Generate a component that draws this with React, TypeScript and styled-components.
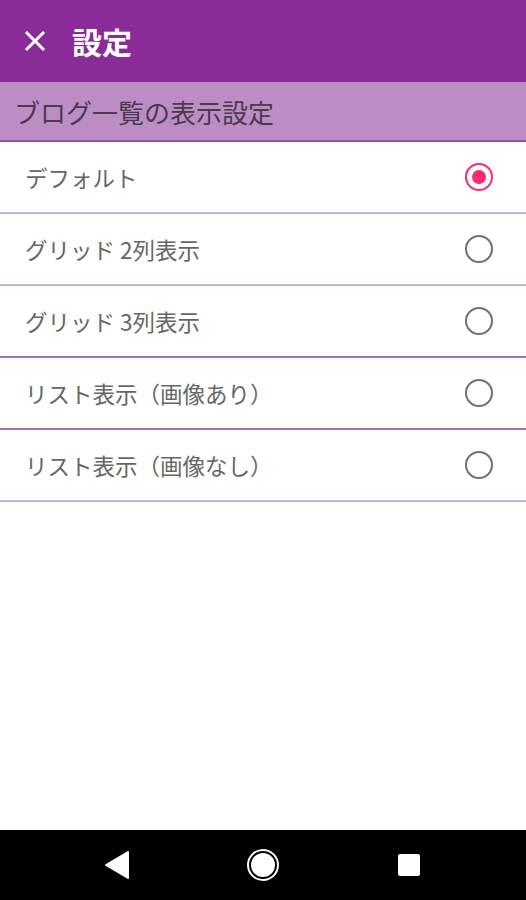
import styled, { createGlobalStyle } from "styled-components";

const GlobalStyle = createGlobalStyle`
  html, body {
    margin: 0;
    padding: 0;
    background: #ffffff;
  }
  body {
    font-family: "Noto Sans CJK JP", "Noto Sans", Roboto, sans-serif;
  }
`;

const Screen = styled.div`
  width: 526px;
  height: 900px;
  display: flex;
  flex-direction: column;
  background: #ffffff;
  overflow: hidden;
`;

const AppBar = styled.header`
  height: 82px;
  flex: none;
  background: #8a2b99;
  display: flex;
  align-items: center;
  padding: 0 0 0 22px;
  gap: 24px;
  color: #ffffff;
`;

const CloseButton = styled.button.attrs({ type: "button" })`
  all: unset;
  width: 26px;
  height: 26px;
  display: flex;
  align-items: center;
  justify-content: center;
`;

const Title = styled.h1`
  margin: 0;
  font-size: 30px;
  font-weight: 700;
  line-height: 1;
`;

const SectionHeader = styled.div`
  height: 58px;
  flex: none;
  background: #bc8dc4;
  border-bottom: 2px solid #9150a0;
  display: flex;
  align-items: center;
  padding-left: 14px;
  font-size: 26px;
  color: #4a3b4f;
`;

const OptionList = styled.ul`
  list-style: none;
  margin: 0;
  padding: 0;
`;

const OptionRow = styled.li<{ $dark?: boolean }>`
  height: 70px;
  display: flex;
  align-items: center;
  justify-content: space-between;
  padding: 0 33px 0 25px;
  border-bottom: 2px solid ${(p) => (p.$dark ? "#a770b4" : "#c9b0cf")};
  font-size: 22.5px;
  color: #666666;
`;

const Radio = styled.span<{ $checked?: boolean }>`
  width: 28px;
  height: 28px;
  border-radius: 50%;
  box-sizing: border-box;
  border: 2.5px solid ${(p) => (p.$checked ? "#ff2a6d" : "#6f6f6f")};
  display: flex;
  align-items: center;
  justify-content: center;

  &::after {
    content: "";
    width: 14px;
    height: 14px;
    border-radius: 50%;
    background: ${(p) => (p.$checked ? "#ff2a6d" : "transparent")};
  }
`;

const Spacer = styled.div`
  flex: 1;
`;

const NavBar = styled.nav`
  height: 70px;
  flex: none;
  background: #000000;
  display: grid;
  grid-template-columns: repeat(3, 146px);
  justify-content: center;
  align-items: center;
  justify-items: center;
`;

const options = [
  { label: "デフォルト", checked: true, dark: false },
  { label: "グリッド 2列表示", checked: false, dark: false },
  { label: "グリッド 3列表示", checked: false, dark: true },
  { label: "リスト表示（画像あり）", checked: false, dark: true },
  { label: "リスト表示（画像なし）", checked: false, dark: false },
];

export default function App() {
  return (
    <Screen>
      <GlobalStyle />
      <AppBar>
        <CloseButton aria-label="閉じる">
          <svg width="22" height="22" viewBox="0 0 22 22">
            <path
              d="M3 3 L19 19 M19 3 L3 19"
              stroke="#ffffff"
              strokeWidth="3"
              strokeLinecap="square"
            />
          </svg>
        </CloseButton>
        <Title>設定</Title>
      </AppBar>
      <SectionHeader>ブログ一覧の表示設定</SectionHeader>
      <OptionList>
        {options.map((o) => (
          <OptionRow key={o.label} $dark={o.dark}>
            <span>{o.label}</span>
            <Radio $checked={o.checked} />
          </OptionRow>
        ))}
      </OptionList>
      <Spacer />
      <NavBar>
        <svg width="26" height="30" viewBox="0 0 26 30">
          <path d="M24 2 L2 15 L24 28 Z" fill="#ffffff" strokeLinejoin="round" stroke="#ffffff" strokeWidth="2" />
        </svg>
        <svg width="34" height="34" viewBox="0 0 34 34">
          <circle cx="17" cy="17" r="15" fill="none" stroke="#ffffff" strokeWidth="2" />
          <circle cx="17" cy="17" r="12" fill="#ffffff" />
        </svg>
        <svg width="24" height="24" viewBox="0 0 24 24">
          <rect x="1" y="1" width="22" height="22" rx="2" fill="#ffffff" />
        </svg>
      </NavBar>
    </Screen>
  );
}
